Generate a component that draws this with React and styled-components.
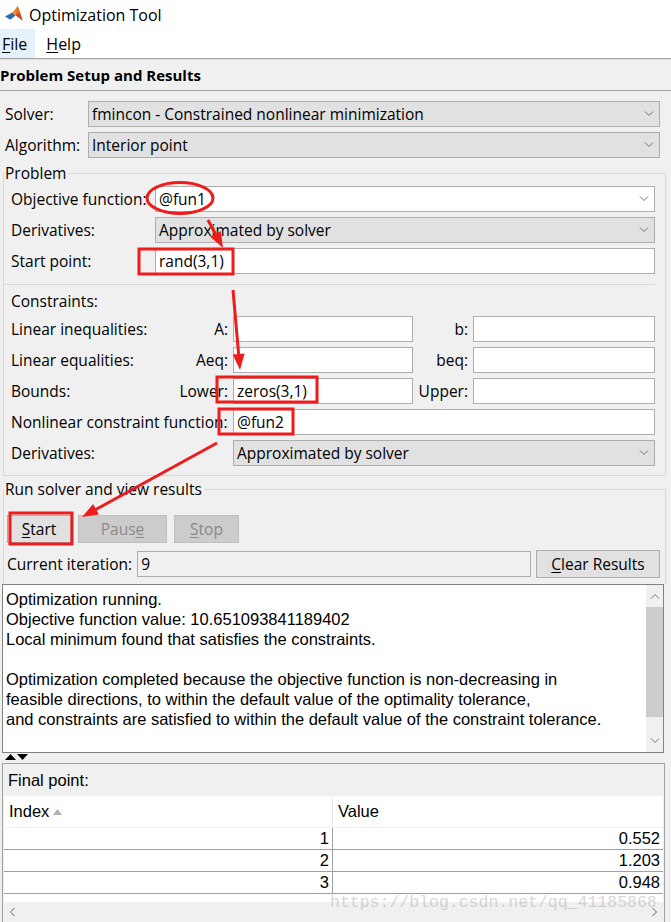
import React from 'react';
import styled, { createGlobalStyle } from 'styled-components';

const GlobalStyle = createGlobalStyle`
  body {
    margin: 0;
    background: #f0f0f0;
  }
`;

const UI_FONT = `"Open Sans", "Noto Sans", sans-serif`;
const TEXT_FONT = `"Liberation Sans", Arial, sans-serif`;

const Window = styled.div`
  width: 671px;
  height: 922px;
  position: relative;
  overflow: hidden;
  background: #f0f0f0;
  font-family: ${UI_FONT};
  font-size: 15.5px;
  color: #000;
`;

const TitleBar = styled.div`
  height: 29px;
  background: #fff;
  display: flex;
  align-items: center;
  gap: 5px;
  padding-left: 5px;
  font-size: 16px;
`;

const MenuBar = styled.div`
  height: 29px;
  background: #fff;
  display: flex;
  align-items: stretch;
  gap: 9px;
  border-bottom: 1px solid #a0a0a0;
`;

const MenuItem = styled.div`
  display: flex;
  align-items: center;
  padding: 0 8px 0 2px;
  background: ${p => (p.$active ? '#e5f1fb' : 'transparent')};
  font-size: 16px;
`;

const SectionHeader = styled.div`
  height: 30px;
  display: flex;
  align-items: center;
  font-weight: 700;
  font-size: 15px;
  border-top: 1px solid #e3e3e3;
  border-bottom: 1px solid #a0a0a0;
`;

const SetupGrid = styled.div`
  display: grid;
  grid-template-columns: 83px 1fr;
  row-gap: 5px;
  align-items: center;
  padding: 10px 11px 0 5px;
`;

const Label = styled.span`
  white-space: nowrap;
  text-align: ${p => (p.$right ? 'right' : 'left')};
  grid-column: ${p => p.$span || 'auto'};
`;

const U = styled.span`
  text-decoration: underline;
  text-underline-offset: 2px;
`;

const Combo = styled.div`
  height: 26px;
  box-sizing: border-box;
  background: #e1e1e1;
  border: 1px solid #adadad;
  display: flex;
  align-items: center;
  justify-content: space-between;
  padding: 0 5px 0 3px;
  grid-column: ${p => p.$span || 'auto'};
`;

const Field = styled.div`
  height: 26px;
  box-sizing: border-box;
  background: ${p => (p.$readonly ? '#f0f0f0' : '#fff')};
  border: 1px solid #adadad;
  display: flex;
  align-items: center;
  justify-content: space-between;
  padding: 0 5px 0 3px;
  grid-column: ${p => p.$span || 'auto'};
  flex: ${p => (p.$grow ? 1 : 'none')};
`;

const Panel = styled.fieldset`
  margin: ${p => (p.$open ? '3px' : '5px')} 5px 0 3px;
  padding: 0;
  border: 1px solid #d9d9d9;
  border-bottom: ${p => (p.$open ? 'none' : '1px solid #d9d9d9')};
  min-width: 0;
`;

const Legend = styled.legend`
  padding: 0 2px 0 1px;
  margin-left: 0;
  line-height: 20px;
  font-size: 15.5px;
`;

const ProblemGrid = styled.div`
  display: grid;
  grid-template-columns: 144px 1fr;
  row-gap: 5px;
  align-items: center;
  padding: 3px 10px 0 7px;
`;

const Rule = styled.div`
  border-top: 1px solid #d9d9d9;
  margin: 10px 10px 0 -1px;
`;

const SubTitle = styled.div`
  padding: 6px 0 0 7px;
  line-height: 20px;
`;

const ConstraintGrid = styled.div`
  display: grid;
  grid-template-columns: 154px 58px 180px 50px 1fr;
  column-gap: 5px;
  row-gap: 5px;
  align-items: center;
  padding: 5px 10px 9px 7px;
`;

const ButtonRow = styled.div`
  display: flex;
  gap: 7px;
  padding: 16px 0 0 3px;
`;

const Button = styled.div`
  height: 28px;
  box-sizing: border-box;
  width: ${p => p.$w}px;
  display: flex;
  align-items: center;
  justify-content: center;
  background: ${p => (p.$disabled ? '#cccccc' : '#e1e1e1')};
  border: 1px solid ${p => (p.$disabled ? '#bfbfbf' : '#adadad')};
  color: ${p => (p.$disabled ? '#8a8a8a' : '#000')};
`;

const IterationRow = styled.div`
  display: flex;
  align-items: center;
  gap: 5px;
  padding: 7px 5px 6px 3px;
`;

const ResultsBox = styled.div`
  margin: 0 7px 0 2px;
  height: 169px;
  box-sizing: border-box;
  border: 1px solid #828282;
  background: #fff;
  display: flex;
`;

const ResultsText = styled.div`
  flex: 1;
  padding: 4px 3px;
  font-family: ${TEXT_FONT};
  font-size: 16.5px;
  line-height: 20px;
  white-space: pre;
`;

const VScroll = styled.div`
  width: 17px;
  display: flex;
  flex-direction: column;
  align-items: center;
  background: #f0f0f0;
`;

const ScrollArrow = styled.div`
  height: 22px;
  display: flex;
  align-items: center;
  justify-content: center;
`;

const Thumb = styled.div`
  width: 100%;
  height: 110px;
  background: #cdcdcd;
`;

const Splitter = styled.div`
  height: 10px;
  display: flex;
  align-items: flex-start;
  padding-left: 5px;
`;

const FinalPanel = styled.div`
  margin: 0 6px 0 2px;
  border: 1px solid #a0a0a0;
  height: 170px;
  box-sizing: border-box;
  font-family: ${TEXT_FONT};
  font-size: 16.5px;
`;

const FinalLabel = styled.div`
  height: 32px;
  display: flex;
  align-items: center;
  padding-left: 5px;
`;

const Table = styled.div`
  background: #fff;
  margin: 0 1px;
`;

const Row = styled.div`
  display: grid;
  grid-template-columns: 329px 1fr;
  height: ${p => (p.$head ? 31 : 21)}px;
  border-bottom: 1px solid ${p => (p.$head ? '#f0f0f0' : '#a0a0a0')};
`;

const Cell = styled.div`
  display: flex;
  align-items: center;
  justify-content: ${p => (p.$head ? 'flex-start' : 'flex-end')};
  gap: 4px;
  padding: ${p => (p.$head ? '0 0 0 5px' : '0 3px 0 0')};
  border-right: ${p => (p.$first ? `1px solid ${p.$head ? '#e8e8e8' : '#a0a0a0'}` : 'none')};
`;

const TableGap = styled.div`
  height: 8px;
  background: #fff;
`;

const HScroll = styled.div`
  height: 20px;
  display: flex;
  align-items: center;
  justify-content: space-between;
  padding: 0 6px;
  background: #f0f0f0;
`;

const Watermark = styled.div`
  position: absolute;
  left: 330px;
  top: 893px;
  font-family: "Liberation Mono", monospace;
  font-size: 16.5px;
  color: rgba(175, 175, 175, 0.5);
  pointer-events: none;
`;

const Marks = styled.svg`
  position: absolute;
  left: 0;
  top: 0;
  pointer-events: none;
`;

const Chevron = ({ up, color = '#707070' }) => (
  <svg width="10" height="6" viewBox="0 0 10 6">
    <path d={up ? 'M1 5.5 L5 1.5 L9 5.5' : 'M1 0.5 L5 4.5 L9 0.5'} fill="none" stroke={color} strokeWidth="1" />
  </svg>
);

const SideChevron = ({ right }) => (
  <svg width="6" height="10" viewBox="0 0 6 10">
    <path d={right ? 'M0.5 1 L4.5 5 L0.5 9' : 'M5.5 1 L1.5 5 L5.5 9'} fill="none" stroke="#606060" strokeWidth="1" />
  </svg>
);

// small membrane logo in the window caption
const Logo = () => (
  <svg width="19" height="17" viewBox="0 0 18 16">
    <polygon points="0,10 7,6 10,9 5,13" fill="#2a6cb4" />
    <polygon points="7,6 12,0 10,9" fill="#f08a24" />
    <polygon points="12,0 17,14 13,11 10,9" fill="#c8461e" />
    <polygon points="12,0 14,6 10,9" fill="#e86a1c" />
  </svg>
);

const arrowHead = (x1, y1, x2, y2, len = 16, half = 6) => {
  const dx = x2 - x1;
  const dy = y2 - y1;
  const d = Math.hypot(dx, dy);
  const ux = dx / d;
  const uy = dy / d;
  const bx = x2 - ux * len;
  const by = y2 - uy * len;
  return `${x2},${y2} ${bx - uy * half},${by + ux * half} ${bx + uy * half},${by - ux * half}`;
};

const Arrow = ({ x1, y1, x2, y2 }) => {
  const d = Math.hypot(x2 - x1, y2 - y1);
  const ex = x2 - ((x2 - x1) / d) * 12;
  const ey = y2 - ((y2 - y1) / d) * 12;
  return (
    <g>
      <line x1={x1} y1={y1} x2={ex} y2={ey} stroke="#ee1c1c" strokeWidth="3" />
      <polygon points={arrowHead(x1, y1, x2, y2)} fill="#ee1c1c" />
    </g>
  );
};

const output = [
  'Optimization running.',
  'Objective function value: 10.651093841189402',
  'Local minimum found that satisfies the constraints.',
  '',
  'Optimization completed because the objective function is non-decreasing in',
  'feasible directions, to within the default value of the optimality tolerance,',
  'and constraints are satisfied to within the default value of the constraint tolerance.',
].join('\n');

const finalPoint = [
  [1, '0.552'],
  [2, '1.203'],
  [3, '0.948'],
];

export default function App() {
  return (
    <Window>
      <GlobalStyle />
      <TitleBar>
        <Logo />
        Optimization Tool
      </TitleBar>
      <MenuBar>
        <MenuItem $active>
          <U>F</U>ile
        </MenuItem>
        <MenuItem>
          <U>H</U>elp
        </MenuItem>
      </MenuBar>
      <SectionHeader>Problem Setup and Results</SectionHeader>

      <SetupGrid>
        <Label>Solver:</Label>
        <Combo>
          fmincon - Constrained nonlinear minimization
          <Chevron />
        </Combo>
        <Label>Algorithm:</Label>
        <Combo>
          Interior point
          <Chevron />
        </Combo>
      </SetupGrid>

      <Panel>
        <Legend>Problem</Legend>
        <ProblemGrid>
          <Label>Objective function:</Label>
          <Field>
            @fun1
            <Chevron />
          </Field>
          <Label>Derivatives:</Label>
          <Combo>
            Approximated by solver
            <Chevron />
          </Combo>
          <Label>Start point:</Label>
          <Field>rand(3,1)</Field>
        </ProblemGrid>
        <Rule />
        <SubTitle>Constraints:</SubTitle>
        <ConstraintGrid>
          <Label>Linear inequalities:</Label>
          <Label $right>A:</Label>
          <Field />
          <Label $right>b:</Label>
          <Field />

          <Label>Linear equalities:</Label>
          <Label $right>Aeq:</Label>
          <Field />
          <Label $right>beq:</Label>
          <Field />

          <Label>Bounds:</Label>
          <Label $right>Lower:</Label>
          <Field>zeros(3,1)</Field>
          <Label $right>Upper:</Label>
          <Field />

          <Label $span="1 / 3">Nonlinear constraint function:</Label>
          <Field $span="3 / 6">@fun2</Field>

          <Label $span="1 / 3">Derivatives:</Label>
          <Combo $span="3 / 6">
            Approximated by solver
            <Chevron />
          </Combo>
        </ConstraintGrid>
      </Panel>

      <Panel $open>
        <Legend>Run solver and view results</Legend>
        <ButtonRow>
          <Button $w={64}>
            <U>S</U>tart
          </Button>
          <Button $w={89} $disabled>
            Paus<U>e</U>
          </Button>
          <Button $w={65} $disabled>
            <U>S</U>top
          </Button>
        </ButtonRow>
        <IterationRow>
          <Label>Current iteration:</Label>
          <Field $readonly $grow>9</Field>
          <Button $w={124}>
            <U>C</U>lear Results
          </Button>
        </IterationRow>
      </Panel>

      <ResultsBox>
        <ResultsText>{output}</ResultsText>
        <VScroll>
          <ScrollArrow>
            <Chevron up />
          </ScrollArrow>
          <Thumb />
          <div style={{ flex: 1 }} />
          <ScrollArrow>
            <Chevron />
          </ScrollArrow>
        </VScroll>
      </ResultsBox>

      <Splitter>
        <svg width="24" height="8" viewBox="0 0 24 8">
          <polygon points="0,7 5.5,1 11,7" fill="#000" />
          <polygon points="12,1 23,1 17.5,7" fill="#000" />
        </svg>
      </Splitter>

      <FinalPanel>
        <FinalLabel>Final point:</FinalLabel>
        <Table>
          <Row $head>
            <Cell $head $first>
              Index
              <svg width="9" height="6" viewBox="0 0 9 6">
                <polygon points="0,6 4.5,0 9,6" fill="#b0b0b0" />
              </svg>
            </Cell>
            <Cell $head>Value</Cell>
          </Row>
          {finalPoint.map(([i, v]) => (
            <Row key={i}>
              <Cell $first>{i}</Cell>
              <Cell>{v}</Cell>
            </Row>
          ))}
          <TableGap />
        </Table>
        <HScroll>
          <SideChevron />
          <SideChevron right />
        </HScroll>
      </FinalPanel>

      <Watermark>https://blog.csdn.net/qq_41185868</Watermark>

      <Marks width="671" height="922" viewBox="0 0 671 922">
        <g fill="none" stroke="#ee1c1c" strokeWidth="3">
          <ellipse cx="180" cy="198" rx="33" ry="15.5" />
          <rect x="139" y="249" width="94" height="25" />
          <rect x="217" y="377" width="100" height="25" />
          <rect x="219" y="409" width="74" height="25" />
          <rect x="10" y="513" width="62" height="31" />
        </g>
        <Arrow x1={208} y1={220} x2={223} y2={248} />
        <Arrow x1={233} y1={290} x2={240} y2={370} />
        <Arrow x1={217} y1={443} x2={82} y2={517} />
      </Marks>
    </Window>
  );
}
